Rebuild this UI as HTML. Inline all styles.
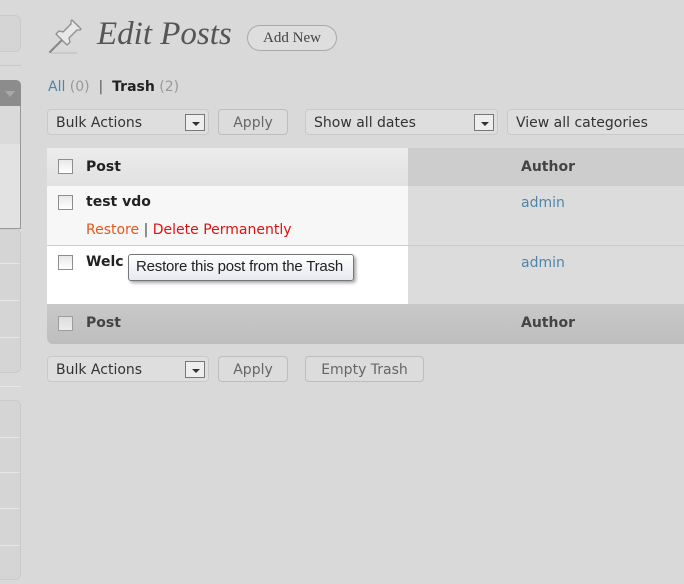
<!DOCTYPE html>
<html><head><meta charset="utf-8"><style>
*{margin:0;padding:0;box-sizing:border-box}
body{width:684px;height:584px;overflow:hidden;background:#d9d9d9;font-family:"DejaVu Sans","Liberation Sans",sans-serif;font-size:13px;color:#333;position:relative}
.a{position:absolute}
.sb{border:1px solid #cacaca;border-left:none;border-radius:0 6px 6px 0;background:#d5d5d5}
.sel{position:absolute;height:26px;border:1px solid #c9c9c9;border-radius:4px;background:#dedede;font-size:14px;color:#333;padding:5px 8px 0;white-space:nowrap;overflow:hidden}
.dd{position:absolute;right:3px;top:4px;width:20px;height:17px;border:1px solid #777;background:#eee}
.dd:after{content:"";position:absolute;left:6px;top:7px;border-left:4px solid transparent;border-right:4px solid transparent;border-top:4px solid #333}
.btn{position:absolute;height:26px;border:1px solid #bdbdbd;border-radius:4px;background:#dcdcdc;color:#666;font-size:14px;text-align:center;line-height:26px}
.cb{position:absolute;width:15px;height:15px;border:1px solid #8d8d8d;background:linear-gradient(#e8e8e8,#fff)}
b{font-weight:bold}
</style></head><body>
<div class="a sb" style="left:0;top:15px;width:21px;height:37px"></div>
<div class="a" style="left:0;top:65px;width:21px;height:1px;background:#c8c8c8"></div>
<div class="a" style="left:0;top:80px;width:21px;height:26px;background:#8c8c8c;border-radius:0 5px 0 0"></div>
<div class="a" style="left:5px;top:91px;border-left:5px solid transparent;border-right:5px solid transparent;border-top:6px solid #a8a8a8"></div>
<div class="a" style="left:0;top:106px;width:21px;height:123px;background:#e2e2e2;border:1px solid #9a9a9a;border-left:none"></div>
<div class="a" style="left:0;top:106px;width:20px;height:38px;background:#dadada"></div>
<div class="a sb" style="left:0;top:229px;width:21px;height:144px"></div>
<div class="a" style="left:0;top:263px;width:20px;height:1px;background:#e6e6e6"></div>
<div class="a" style="left:0;top:300px;width:20px;height:1px;background:#e6e6e6"></div>
<div class="a" style="left:0;top:337px;width:20px;height:1px;background:#e6e6e6"></div>
<div class="a" style="left:0;top:386px;width:21px;height:1px;background:#e6e6e6"></div>
<div class="a sb" style="left:0;top:400px;width:21px;height:180px"></div>
<div class="a" style="left:0;top:437px;width:20px;height:1px;background:#e6e6e6"></div>
<div class="a" style="left:0;top:472px;width:20px;height:1px;background:#e6e6e6"></div>
<div class="a" style="left:0;top:508px;width:20px;height:1px;background:#e6e6e6"></div>
<div class="a" style="left:0;top:545px;width:20px;height:1px;background:#e6e6e6"></div>
<svg class="a" style="left:47px;top:16px" width="42" height="40" viewBox="0 0 42 40">
<path d="M3 36 L16 23" stroke="#8a8a8a" stroke-width="2.2" stroke-linecap="round"/>
<path d="M12 21 L20 29 L23 26 L22 22 L30 14 L33 14 L34 13 L25 4 L24 5 L24 8 L16 16 L12 15 L9 18 Z" fill="#e8e8e8" stroke="#8e8e8e" stroke-width="1.3" stroke-linejoin="round"/>
<path d="M4 37 L30 37" stroke="#bbb" stroke-width="1"/>
</svg>
<div class="a" style="left:97px;top:16px;font-family:'Liberation Serif',serif;font-style:italic;font-size:33px;color:#555">Edit Posts</div>
<div class="a" style="left:247px;top:25px;width:90px;height:26px;border:1px solid #aaa;border-radius:13px;background:#dedede;font-family:'Liberation Serif',serif;font-size:15px;color:#444;text-align:center;line-height:24px">Add New</div>
<div class="a" style="left:48px;top:79px;font-size:14px;color:#999"><span style="color:#4f86a8">All</span> (0) <span style="color:#555">&nbsp;|&nbsp;</span> <b style="color:#222">Trash</b> (2)</div>
<div class="sel" style="left:47px;top:109px;width:162px">Bulk Actions<div class="dd"></div></div>
<div class="btn" style="left:218px;top:109px;width:70px">Apply</div>
<div class="sel" style="left:305px;top:109px;width:193px">Show all dates<div class="dd"></div></div>
<div class="sel" style="left:507px;top:109px;width:190px">View all categories</div>
<div class="a" style="left:47px;top:148px;width:637px;height:38px;background:#cdcdcd"></div>
<div class="a" style="left:47px;top:148px;width:361px;height:38px;background:linear-gradient(#ececec,#e1e1e1)"></div>
<div class="a" style="left:47px;top:186px;width:637px;height:118px;background:#dcdcdc"></div>
<div class="a" style="left:47px;top:186px;width:361px;height:59px;background:#f7f7f7"></div>
<div class="a" style="left:47px;top:246px;width:361px;height:58px;background:#fff"></div>
<div class="a" style="left:47px;top:245px;width:637px;height:1px;background:#ccc"></div>
<div class="a" style="left:47px;top:304px;width:637px;height:40px;background:linear-gradient(#c8c8c8,#bebebe);border-radius:0 0 0 6px"></div>
<div class="cb" style="left:58px;top:159px"></div>
<div class="a" style="left:86px;top:159px;font-size:14px;font-weight:bold;color:#222">Post</div>
<div class="a" style="left:521px;top:159px;font-size:14px;font-weight:bold;color:#444">Author</div>
<div class="cb" style="left:58px;top:195px"></div>
<div class="a" style="left:86px;top:194px;font-size:14px;font-weight:bold;color:#222">test vdo</div>
<div class="a" style="left:86px;top:222px;font-size:14px;color:#e2571e">Restore <span style="color:#444">|</span> <span style="color:#d11">Delete Permanently</span></div>
<div class="a" style="left:521px;top:195px;font-size:14px;color:#4f86a8">admin</div>
<div class="cb" style="left:58px;top:255px"></div>
<div class="a" style="left:86px;top:254px;font-size:14px;font-weight:bold;color:#222">Welc</div>
<div class="a" style="left:521px;top:255px;font-size:14px;color:#4f86a8">admin</div>
<div class="cb" style="left:58px;top:316px;opacity:.7"></div>
<div class="a" style="left:86px;top:315px;font-size:14px;font-weight:bold;color:#444">Post</div>
<div class="a" style="left:521px;top:315px;font-size:14px;font-weight:bold;color:#444">Author</div>
<div class="a" style="left:128px;top:254px;width:226px;height:27px;border:1px solid #767676;border-radius:3px;background:linear-gradient(#fff,#e6e9f0);box-shadow:2px 2px 3px rgba(0,0,0,.35);font-family:'Liberation Sans',sans-serif;font-size:15px;color:#222;padding:3px 0 0 7px;white-space:nowrap;letter-spacing:-0.2px">Restore this post from the Trash</div>
<div class="sel" style="left:47px;top:356px;width:162px">Bulk Actions<div class="dd"></div></div>
<div class="btn" style="left:218px;top:356px;width:70px">Apply</div>
<div class="btn" style="left:305px;top:356px;width:119px">Empty Trash</div>
</body></html>
